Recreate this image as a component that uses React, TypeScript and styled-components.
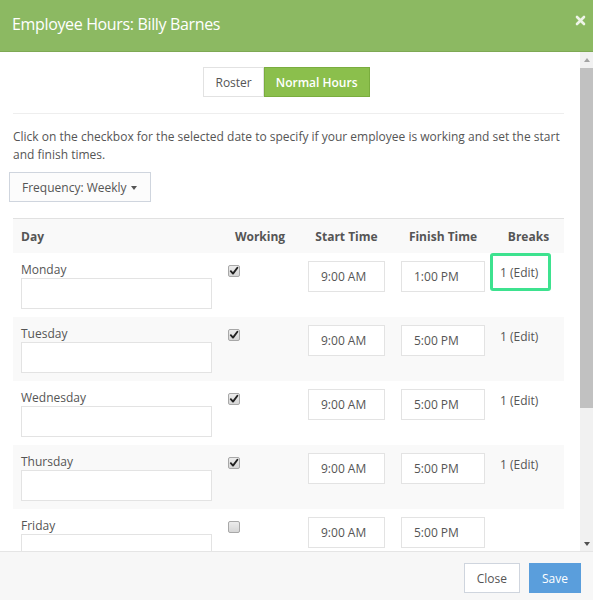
import React from "react";
import styled, { createGlobalStyle } from "styled-components";

const GlobalStyle = createGlobalStyle`
  html, body {
    margin: 0;
    padding: 0;
  }
  body {
    font-family: "Open Sans", "Liberation Sans", sans-serif;
    font-size: 12px;
    color: #555;
    background: #fff;
  }
  *, *::before, *::after {
    box-sizing: border-box;
  }
`;

const Modal = styled.div`
  width: 593px;
  height: 600px;
  display: flex;
  flex-direction: column;
  overflow: hidden;
`;

const Header = styled.div`
  height: 52px;
  flex: none;
  background: #8cb962;
  border-bottom: 1px solid #7ea954;
  display: flex;
  align-items: center;
  justify-content: space-between;
  padding: 0 7px 4px 12px;
`;

const Title = styled.h1`
  margin: 0;
  font-size: 16px;
  font-weight: 400;
  letter-spacing: -0.35px;
  color: #fff;
`;

const CloseX = styled.svg`
  width: 11px;
  height: 11px;
  margin-bottom: 6px;
`;

const Body = styled.div`
  flex: 1;
  min-height: 0;
  display: flex;
`;

const Content = styled.div`
  flex: 1;
  overflow: hidden;
  padding: 15px 16px 0 13px;
`;

const ScrollBar = styled.div`
  width: 13px;
  flex: none;
  background: #f1f1f1;
  display: flex;
  flex-direction: column;
`;

const ScrollArrow = styled.div<{ $down?: boolean }>`
  height: 15px;
  flex: none;
  display: flex;
  align-items: center;
  justify-content: center;

  &::before {
    content: "";
    width: 0;
    height: 0;
    border-left: 3.5px solid transparent;
    border-right: 3.5px solid transparent;
    ${(p) =>
      p.$down ? "border-top: 4px solid #505050;" : "border-bottom: 4px solid #a3a3a3;"}
  }
`;

const ScrollTrack = styled.div`
  flex: 1;
  padding-top: 1px;
`;

const ScrollThumb = styled.div`
  height: 340px;
  background: #c1c1c1;
`;

const TabGroup = styled.div`
  display: flex;
  justify-content: center;
  padding-right: 4px;
`;

const Tab = styled.button<{ $active?: boolean }>`
  height: 30px;
  padding: 0 11px;
  font-family: inherit;
  font-size: 12px;
  font-weight: ${(p) => (p.$active ? 600 : 400)};
  color: ${(p) => (p.$active ? "#fff" : "#555")};
  background: ${(p) => (p.$active ? "#8bbf4c" : "#fff")};
  border: 1px solid ${(p) => (p.$active ? "#7aad3e" : "#e2e2e2")};
  border-radius: 0;
`;

const Divider = styled.hr`
  margin: 16px 0 0;
  border: 0;
  border-top: 1px solid #eee;
`;

const Intro = styled.p`
  margin: 14px 0 0;
  line-height: 18px;
  font-size: 12px;
  color: #555;
`;

const Dropdown = styled.button`
  margin: 8px 0 0 -4px;
  height: 30px;
  width: 142px;
  padding: 0 12px;
  font-family: inherit;
  font-size: 12px;
  color: #555;
  background: #fcfcfc;
  border: 1px solid #cfd5de;
  display: flex;
  align-items: center;
  gap: 4px;
`;

const Caret = styled.span`
  width: 0;
  height: 0;
  border-left: 3.5px solid transparent;
  border-right: 3.5px solid transparent;
  border-top: 4px solid #555;
  margin-top: 1px;
`;

const Table = styled.table`
  margin-top: 16px;
  width: 551px;
  border-collapse: collapse;
  border-top: 1px solid #e1e1e1;
  table-layout: fixed;
`;

const Th = styled.th<{ $left?: boolean }>`
  height: 34px;
  padding: 2px 8px 0;
  background: #f9f9f9;
  font-weight: 700;
  font-size: 12px;
  color: #555;
  text-align: ${(p) => (p.$left ? "left" : "center")};
`;

const Row = styled.tr<{ $striped?: boolean }>`
  background: ${(p) => (p.$striped ? "#f9f9f9" : "#fff")};
`;

const Td = styled.td`
  padding: 8px;
  vertical-align: top;
  height: 64px;
`;

const DayLabel = styled.div`
  line-height: 17px;
  font-size: 12px;
  color: #555;
`;

const TextBox = styled.div`
  height: 31px;
  background: #fff;
  border: 1px solid #e3e3e3;
`;

const TimeBox = styled.div`
  height: 31px;
  background: #fff;
  border: 1px solid #e3e3e3;
  display: flex;
  align-items: center;
  padding-left: 12px;
  font-size: 12px;
  color: #555;
`;

const Check = styled.span`
  display: block;
  width: 12px;
  height: 12px;
  margin-top: 4px;
  border: 1px solid #a8a8a8;
  border-radius: 2px;
  background: linear-gradient(#ececec, #d6d6d6);
  position: relative;
`;

const BreaksLink = styled.span<{ $focused?: boolean }>`
  display: inline-block;
  margin: 3px 0 0 -1px;
  line-height: 17px;
  color: #555;
  position: relative;

  ${(p) =>
    p.$focused &&
    `
    &::after {
      content: "";
      position: absolute;
      left: -10px;
      top: -11px;
      width: 61px;
      height: 38px;
      border: 3px solid #3de28f;
      border-radius: 3px;
    }
  `}
`;

const Footer = styled.div`
  height: 49px;
  flex: none;
  background: #f7f7f7;
  border-top: 1px solid #e5e5e5;
  display: flex;
  justify-content: flex-end;
  align-items: flex-start;
  gap: 9px;
  padding: 11px 12px 0;
`;

const FooterButton = styled.button<{ $primary?: boolean }>`
  height: 30px;
  padding: 0 12px;
  font-family: inherit;
  font-size: 12px;
  color: ${(p) => (p.$primary ? "#fff" : "#555")};
  background: ${(p) => (p.$primary ? "#5a9edc" : "#fff")};
  border: 1px solid ${(p) => (p.$primary ? "#5a9edc" : "#cfd5de")};
`;

const days = [
  { name: "Monday", working: true, start: "9:00 AM", finish: "1:00 PM", breaks: "1 (Edit)" },
  { name: "Tuesday", working: true, start: "9:00 AM", finish: "5:00 PM", breaks: "1 (Edit)" },
  { name: "Wednesday", working: true, start: "9:00 AM", finish: "5:00 PM", breaks: "1 (Edit)" },
  { name: "Thursday", working: true, start: "9:00 AM", finish: "5:00 PM", breaks: "1 (Edit)" },
  { name: "Friday", working: false, start: "9:00 AM", finish: "5:00 PM", breaks: "" },
];

function CheckMark() {
  return (
    <svg width="10" height="10" viewBox="0 0 10 10" style={{ position: "absolute", left: 0, top: 0 }}>
      <path d="M1.8 5.2 L4 7.6 L8.4 1.8" fill="none" stroke="#222" strokeWidth="1.9" strokeLinecap="round" strokeLinejoin="round" />
    </svg>
  );
}

function App() {
  return (
    <Modal>
      <GlobalStyle />
      <Header>
        <Title>Employee Hours: Billy Barnes</Title>
        <CloseX viewBox="0 0 11 11">
          <path d="M2 2 L9 9 M9 2 L2 9" stroke="#eef4e8" strokeWidth="2.6" strokeLinecap="round" />
        </CloseX>
      </Header>
      <Body>
        <Content>
          <TabGroup>
            <Tab>Roster</Tab>
            <Tab $active>Normal Hours</Tab>
          </TabGroup>
          <Divider />
          <Intro>
            Click on the checkbox for the selected date to specify if your employee is working and set the start
            and finish times.
          </Intro>
          <Dropdown>
            Frequency: Weekly <Caret />
          </Dropdown>
          <Table>
            <colgroup>
              <col style={{ width: 207 }} />
              <col style={{ width: 80 }} />
              <col style={{ width: 93 }} />
              <col style={{ width: 100 }} />
              <col style={{ width: 71 }} />
            </colgroup>
            <thead>
              <tr>
                <Th $left>Day</Th>
                <Th>Working</Th>
                <Th>Start Time</Th>
                <Th>Finish Time</Th>
                <Th>Breaks</Th>
              </tr>
            </thead>
            <tbody>
              {days.map((d, i) => (
                <Row key={d.name} $striped={i % 2 === 1}>
                  <Td>
                    <DayLabel>{d.name}</DayLabel>
                    <TextBox />
                  </Td>
                  <Td>
                    <Check>{d.working && <CheckMark />}</Check>
                  </Td>
                  <Td>
                    <TimeBox>{d.start}</TimeBox>
                  </Td>
                  <Td>
                    <TimeBox>{d.finish}</TimeBox>
                  </Td>
                  <Td>{d.breaks && <BreaksLink $focused={i === 0}>{d.breaks}</BreaksLink>}</Td>
                </Row>
              ))}
            </tbody>
          </Table>
        </Content>
        <ScrollBar>
          <ScrollArrow />
          <ScrollTrack>
            <ScrollThumb />
          </ScrollTrack>
          <ScrollArrow $down />
        </ScrollBar>
      </Body>
      <Footer>
        <FooterButton>Close</FooterButton>
        <FooterButton $primary>Save</FooterButton>
      </Footer>
    </Modal>
  );
}

export default App;
